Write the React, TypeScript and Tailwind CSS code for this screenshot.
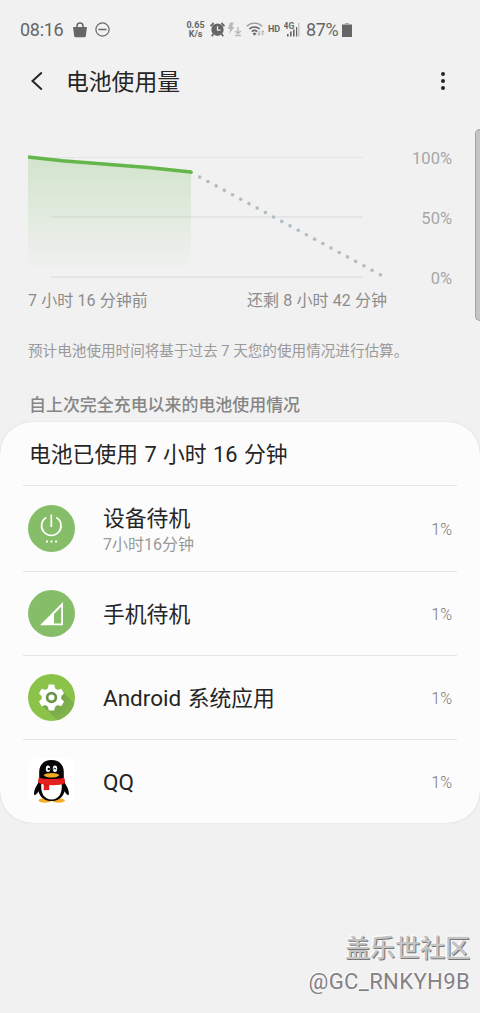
import type { ReactNode } from 'react'

const DOT_COUNT = 23

function StatusBar() {
  return (
    <div className="flex h-[59px] items-center pl-5 pr-[128px] text-[#666]">
      <span className="w-[53px] text-[18px] tracking-[-0.3px]">08:16</span>
      <svg width="14" height="16" viewBox="0 0 14 16" fill="none">
        <path d="M0 5h14l-1.2 9a1.3 1.3 0 0 1-1.3 1.2H2.5A1.3 1.3 0 0 1 1.2 14z" fill="#666" />
        <path d="M4 6V4a3 3 0 0 1 6 0v2" stroke="#666" strokeWidth="1.5" />
      </svg>
      <svg className="ml-2" width="15" height="15" viewBox="0 0 15 15" fill="none" stroke="#666">
        <circle cx="7.5" cy="7.5" r="6.6" strokeWidth="1.2" />
        <path d="M3.5 7.5h8" strokeWidth="1.5" />
      </svg>

      <div className="ml-auto flex items-center">
        <div className="mr-px w-[19px] text-center text-[9px] font-bold leading-[9px]">
          <div>0.65</div>
          <div>K/s</div>
        </div>
        {/* alarm */}
        <svg className="ml-1" width="15" height="15" viewBox="0 0 15 15" fill="none">
          <circle cx="7.5" cy="7.7" r="6.2" fill="#666" />
          <path d="M0.5 4.2 3.6 1M14.5 4.2 11.4 1M3.4 12 1.8 14.2M11.6 12 13.2 14.2" stroke="#666" strokeWidth="1.8" />
          <path d="M7.5 4.3v3.8h3" stroke="#f1f1f1" strokeWidth="1.2" />
        </svg>
        {/* fast charge / download */}
        <svg className="ml-[2px]" width="15" height="15" viewBox="0 0 15 15" fill="none">
          <path d="M3 0.5h3.8L5 5h2.6L2 12l1.2-5H0.8z" fill="#b9b9b9" />
          <path d="M11 5v6.5M8.3 9l2.7 2.7L13.7 9M8 13.5h6" stroke="#b9b9b9" strokeWidth="1.4" />
        </svg>
        {/* wifi */}
        <svg className="ml-[4px]" width="19" height="15" viewBox="0 0 19 15" fill="none">
          <path d="M0.8 4.3a11 11 0 0 1 15.4 0" stroke="#999" strokeWidth="1.4" />
          <path d="M3.3 7a7.5 7.5 0 0 1 10.4 0M5.8 9.6a4 4 0 0 1 5.4 0" stroke="#666" strokeWidth="1.5" />
          <path d="m6.6 11.5 1.9-1 1.9 1-1.9 2.3z" fill="#666" />
          <path d="M13 8.6v4.6m-1.5-1.5 1.5 1.5 1.5-1.5M16.8 13.4V8.8m-1.5 1.5 1.5-1.5 1.5 1.5" stroke="#aaa" />
        </svg>
        <span className="ml-[3px] w-3 text-[9px] font-bold leading-none">HD</span>
        {/* mobile signal */}
        <svg className="ml-[4px]" width="16" height="15" viewBox="0 0 16 15">
          <text x="-0.5" y="7" fontSize="8.5" fontWeight="700" fill="#666">4G</text>
          <path d="M3 12h1.6v2.5H3zM6 9.5h1.6v5H6zM9 7.5h1.6v7H9zM12 5h1.2v9.5H12z" fill="#666" />
          <path d="M14.2 1h1.2v13.500h-1.2z" fill="#bbb" />
        </svg>
        <span className="ml-[6px] w-8 text-[18px] tracking-[-0.4px]">87%</span>
        <svg className="ml-[4px]" width="10" height="14" viewBox="0 0 10 14">
          <path d="M0 1.500h10V14H0z" fill="#666" />
          <path d="M3 0h4v2H3z" fill="#aaa" />
        </svg>
      </div>
    </div>
  )
}

function TitleBar() {
  return (
    <div className="flex h-[44px] items-center pl-[30px] pr-[35px] text-[#252525]">
      <svg width="14" height="20" viewBox="0 0 14 20" fill="none" stroke="#252525" strokeWidth="2">
        <path d="M11.8 1.5 2.5 10l9.3 8.5" />
      </svg>
      <h1 className="ml-[22px] pt-1 text-[22.8px] font-normal leading-none">电池使用量</h1>
      <div className="ml-auto flex flex-col gap-[3px]">
        <span className="size-1 rounded-full bg-[#252525]" />
        <span className="size-1 rounded-full bg-[#252525]" />
        <span className="size-1 rounded-full bg-[#252525]" />
      </div>
    </div>
  )
}

function BatteryChart() {
  return (
    <div className="mt-[42px] px-7">
      <div className="flex">
        <svg width="362" height="140" viewBox="0 0 362 140" fill="none">
          <defs>
            <linearGradient id="level" x1="0" y1="12" x2="0" y2="128" gradientUnits="userSpaceOnUse">
              <stop offset="0" stopColor="#69b84f" stopOpacity="0.23" />
              <stop offset="1" stopColor="#69b84f" stopOpacity="0" />
            </linearGradient>
          </defs>
          <path d="M23 12.5h312" stroke="#e5e5e5" />
          <path d="M23 72h312M23 132h312" stroke="#e5e5e5" strokeWidth="2" />
          <path d="M0 12 32 15.5 163 27V128H0z" fill="url(#level)" />
          <path d="M0 12 34 15.8 120 22.5 163 27" stroke="#64b64a" strokeWidth="3.6" />
          <circle cx="163" cy="27.2" r="1.8" fill="#64b64a" />
          {/* estimated discharge */}
          {Array.from({ length: DOT_COUNT }, (_, i) => (
            <circle key={i} cx={171.7 + i * 8.21} cy={32 + i * 4.44} r="1.8" fill="#b0bcc2" />
          ))}
        </svg>
        <div className="flex flex-1 flex-col pt-1 text-right text-[16.5px] leading-[20px] text-[#a6a6a6]">
          <span className="h-[60px]">100%</span>
          <span className="h-[60px]">50%</span>
          <span>0%</span>
        </div>
      </div>
      <div className="mt-[2px] flex w-[359px] justify-between text-[16px] leading-[20px] text-[#8c8c8c] [word-spacing:0.3px]">
        <span>7 小时 16 分钟前</span>
        <span>还剩 8 小时 42 分钟</span>
      </div>
    </div>
  )
}

function Standby() {
  return (
    <svg width="47" height="47" viewBox="0 0 47 47" fill="none">
      <circle cx="23.5" cy="23.5" r="23.5" fill="#86bd68" />
      <path d="M18.2 12.5a9.7 9.7 0 1 0 10.2 0M23.3 9.5v12.5" stroke="#fff" strokeWidth="1.7" />
      <path d="M18 36.500h2M22.5 36.500h2M27 36.500h2" stroke="#fff" strokeWidth="1.800" />
    </svg>
  )
}

function Signal() {
  return (
    <svg width="47" height="47" viewBox="0 0 47 47" fill="none">
      <circle cx="23.5" cy="23.5" r="23.5" fill="#86bd68" />
      <path d="M12 35.2 35 12V35.2z M26 24v9.4h7.2V16.8z" fill="#fff" fillRule="evenodd" />
    </svg>
  )
}

function AndroidSystem() {
  return (
    <svg width="47" height="47" viewBox="0 0 47 47">
      <defs>
        <clipPath id="disc">
          <circle cx="23.5" cy="23.5" r="23.5" />
        </clipPath>
        <linearGradient id="shade" x1="0.2" y1="0.2" x2="0.9" y2="0.9">
          <stop offset="0" stopColor="#6f9f48" />
          <stop offset="1" stopColor="#86bb4b" />
        </linearGradient>
      </defs>
      <g clipPath="url(#disc)">
        <path d="M0 0h47v47H0z" fill="#8bc34a" />
        <path d="M13 30 30 47h17V30L35 18z" fill="url(#shade)" />
      </g>
      <g fill="#fff">
        <circle cx="23.5" cy="23.5" r="9.8" />
        {[0, 60, 120].map((deg) => (
          <path key={deg} d="M20.8 10.6h5.4l1.2 5v15.8l-1.2 5h-5.4l-1.2-5V15.6z" transform={`rotate(${deg} 23.5 23.5)`} />
        ))}
      </g>
      <circle cx="23.5" cy="23.5" r="5.7" fill="#679447" />
      <circle cx="23.5" cy="23.5" r="3" fill="#fff" />
    </svg>
  )
}

function Penguin() {
  return (
    <svg width="47" height="47" viewBox="0 0 47 47">
      <rect width="47" height="47" rx="9" fill="#fff" />
      <ellipse cx="17" cy="42.500" rx="6.500" ry="2.2" fill="#f5ac22" />
      <ellipse cx="30.5" cy="42.5" rx="6.5" ry="2.2" fill="#f5ac22" />
      <path d="M11 24c-3 4-5.5 9-4.8 12.5.5 1.5 3-.5 4.600-3.5h25.4c1.6 3 4.1 5 4.600 3.5C41.5 33 39 28 36 24z" fill="#050505" />
      <path d="M23.5 2C15 2 11 8 11.2 14.5V20C8 30 10 43 23.5 43S39 30 35.8 20v-5.5C36 8 32 2 23.5 2z" fill="#050505" />
      <path d="M13.5 24C12 35 16 41.5 23.5 41.5S35 35 33.5 24z" fill="#fff" />
      <ellipse cx="20" cy="10.7" rx="2.2" ry="3.2" fill="#fff" />
      <ellipse cx="27" cy="10.7" rx="2.2" ry="3.2" fill="#fff" />
      <circle cx="20.8" cy="11" r="1.2" fill="#050505" />
      <path d="M25.6 11.5c.3-1.8 2.1-1.8 2.4 0" stroke="#050505" fill="none" />
      <path d="M15.5 17c3-2.7 13-2.7 16 0-2 3.4-14 3.4-16 0z" fill="#f5ac22" />
      <path d="M10.8 19.5c6 2 19.4 2 25.4 0l1 5.5c-4 2-10 2.5-16 2V32l-5.5.3v-5.7c-2-.4-4-1-5.7-1.8z" fill="#e5201f" />
      <path d="M15.8 26.6c2 .6 4 .8 5.5.8" stroke="#b41212" fill="none" strokeWidth="0.7" />
    </svg>
  )
}

interface UsageRowProps {
  icon: ReactNode
  name: string
  detail?: string
  percent: string
  height?: string
}

function UsageRow({ icon, name, detail, percent, height = 'h-[84px]' }: UsageRowProps) {
  return (
    <li className={`mx-[23px] flex items-center border-t border-[#e3e3e3] pl-[5px] pr-[5px] ${height}`}>
      {icon}
      <div className={`ml-7 flex-1 ${detail ? 'pt-1' : 'pt-0.5'}`}>
        <div className="text-[21.8px] leading-[28px] text-[#252525] [word-spacing:1px]">
          {/* latin runs are set a little wider than the CJK ones */}
          {name.split(' ').map((part, i) => (
            <span key={part} className={/^[A-Za-z]+$/.test(part) ? 'text-[22.5px]' : ''}>
              {i > 0 && ' '}
              {part}
            </span>
          ))}
        </div>
        {detail && <div className="text-[16px] leading-[23px] text-[#999]">{detail}</div>}
      </div>
      <span className="pt-0.5 text-[16px] font-light text-[#777]">{percent}</span>
    </li>
  )
}

export default function App() {
  return (
    <div className="relative h-[1013px] w-[480px] overflow-hidden bg-[#f1f1f1] font-['Roboto','Noto_Sans_CJK_SC',sans-serif]">
      <StatusBar />
      <TitleBar />
      <BatteryChart />

      <p className="mt-[30px] px-7 text-[14.6px] leading-[20px] text-[#999]">
        预计电池使用时间将基于过去 7 天您的使用情况进行估算。
      </p>
      <h2 className="mt-[33px] px-[29px] text-[16.95px] font-medium leading-[22px] text-[#858585]">
        自上次完全充电以来的电池使用情况
      </h2>

      <section className="mt-[6px] h-[401px] rounded-[32px] bg-[#fcfcfc] shadow-[0_0_1px_#bbb]">
        <div className="flex h-[63px] items-center px-[29px] pt-1 text-[21.8px] text-[#252525] [word-spacing:1px]">
          电池已使用 7 小时 16 分钟
        </div>
        <ul>
          <UsageRow icon={<Standby />} name="设备待机" detail="7小时16分钟" percent="1%" height="h-[86px]" />
          <UsageRow icon={<Signal />} name="手机待机" percent="1%" />
          <UsageRow icon={<AndroidSystem />} name="Android 系统应用" percent="1%" />
          <UsageRow icon={<Penguin />} name="QQ" percent="1%" />
        </ul>
      </section>

      <footer className="mt-[109px] pr-[10px] text-right">
        <div className="text-[25px] font-medium leading-[34px] text-[#c4c4c4] [text-shadow:1px_1px_0_#777,-1px_-1px_0_#fff]">
          盖乐世社区
        </div>
        <div className="text-[22px] leading-[32px] tracking-[0.4px] text-[#858085] [text-shadow:-1px_-1px_0_#fff]">@GC_RNKYH9B</div>
      </footer>

      {/* edge panel handle */}
      <div className="absolute right-0 top-[129px] h-[192px] w-[5px] rounded-l-[5px] border-y border-l border-[#a5a3a1] bg-[#c8c4c1]" />
    </div>
  )
}
